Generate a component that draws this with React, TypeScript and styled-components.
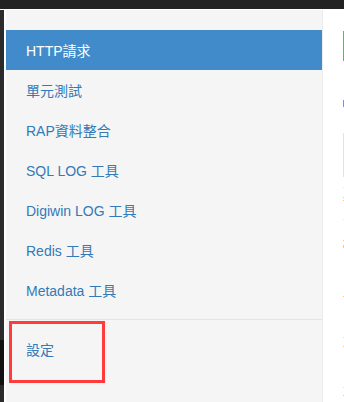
import React from 'react';
import styled, { createGlobalStyle } from 'styled-components';

const GlobalStyle = createGlobalStyle`
  html, body { margin: 0; padding: 0; background: #fff; }
  body {
    font-family: "Liberation Sans", Arial, "Noto Sans CJK TC", sans-serif;
    font-size: 14px;
    overflow: hidden;
  }
`;

const Page = styled.div`
  width: 344px;
  height: 402px;
  display: grid;
  grid-template-rows: 9px 1px 1fr;
  overflow: hidden;
`;

const TopBar = styled.div`
  background: #222;
`;

const Body = styled.div`
  grid-row: 3;
  display: grid;
  grid-template-columns: 4px 2px 316px 1px 1fr;
  min-height: 0;
`;

const Strip = styled.div`
  background: #2b2b2b;
  display: flex;
  flex-direction: column;
  padding-top: 330px;
`;

const StripThumb = styled.div`
  height: 45px;
  background: #111;
`;

const Sidebar = styled.nav`
  grid-column: 3;
  background: #f5f5f5;
  padding-top: 20px;
  display: flex;
  flex-direction: column;
`;

const Item = styled.a<{ $active?: boolean }>`
  display: flex;
  align-items: center;
  height: 40px;
  padding-left: 20px;
  color: ${(p) => (p.$active ? '#fff' : '#337ab7')};
  background: ${(p) => (p.$active ? '#428bca' : 'transparent')};
  text-decoration: none;
  cursor: pointer;
`;

const Divider = styled.div`
  height: 1px;
  margin: 9px 0;
  background: #e5e5e5;
`;

const Bottom = styled.div`
  position: relative;
`;

const Highlight = styled.div`
  position: absolute;
  left: 3px;
  top: -8px;
  width: 90px;
  height: 56px;
  border: 3px solid #ff3b3b;
  pointer-events: none;
`;

const Edge = styled.div`
  background: #ebebeb;
`;

const Main = styled.main`
  padding: 21px 0 0 20px;
  display: flex;
  flex-direction: column;
  overflow: hidden;
`;

const Title = styled.div`
  width: 200px;
  height: 30px;
  border-left: 3px solid #5cb85c;
`;

const Tag = styled.div`
  margin-top: 39px;
  width: 60px;
  height: 7px;
  background: #8a8ad0;
`;

const Box = styled.div`
  margin-top: 26px;
  width: 200px;
  height: 42px;
  border: 1px solid #e3e3e3;
`;

const Mark = styled.div<{ $gap: number; $color: string; $h?: number }>`
  margin-top: ${(p) => p.$gap}px;
  width: 40px;
  height: ${(p) => p.$h ?? 1}px;
  background: ${(p) => p.$color};
`;

const items = ['單元測試', 'RAP資料整合', 'SQL LOG 工具', 'Digiwin LOG 工具', 'Redis 工具', 'Metadata 工具'];

export default function App() {
  return (
    <>
      <GlobalStyle />
      <Page>
        <TopBar />
        <Body>
          <Strip>
            <StripThumb />
          </Strip>
          <Sidebar>
            <Item $active>HTTP請求</Item>
            {items.map((label) => (
              <Item key={label}>{label}</Item>
            ))}
            <Divider />
            <Bottom>
              <Item>設定</Item>
              <Highlight />
            </Bottom>
          </Sidebar>
          <Edge />
          <Main>
            <Title />
            <Tag />
            <Box />
            <Mark $gap={10} $color="#e8e8e8" />
            <Mark $gap={9} $color="#f0c890" />
            <Mark $gap={2} $color="#f0c890" />
            <Mark $gap={18} $color="#e8e8e8" />
            <Mark $gap={20} $color="#f0c890" />
            <Mark $gap={4} $color="#f0c890" $h={3} />
            <Mark $gap={48} $color="#f0c890" />
            <Mark $gap={40} $color="#e0e0e0" />
            <Mark $gap={8} $color="#f0c890" />
            <Mark $gap={40} $color="#e0e0e0" />
            <Mark $gap={7} $color="#f0c890" />
          </Main>
        </Body>
      </Page>
    </>
  );
}
